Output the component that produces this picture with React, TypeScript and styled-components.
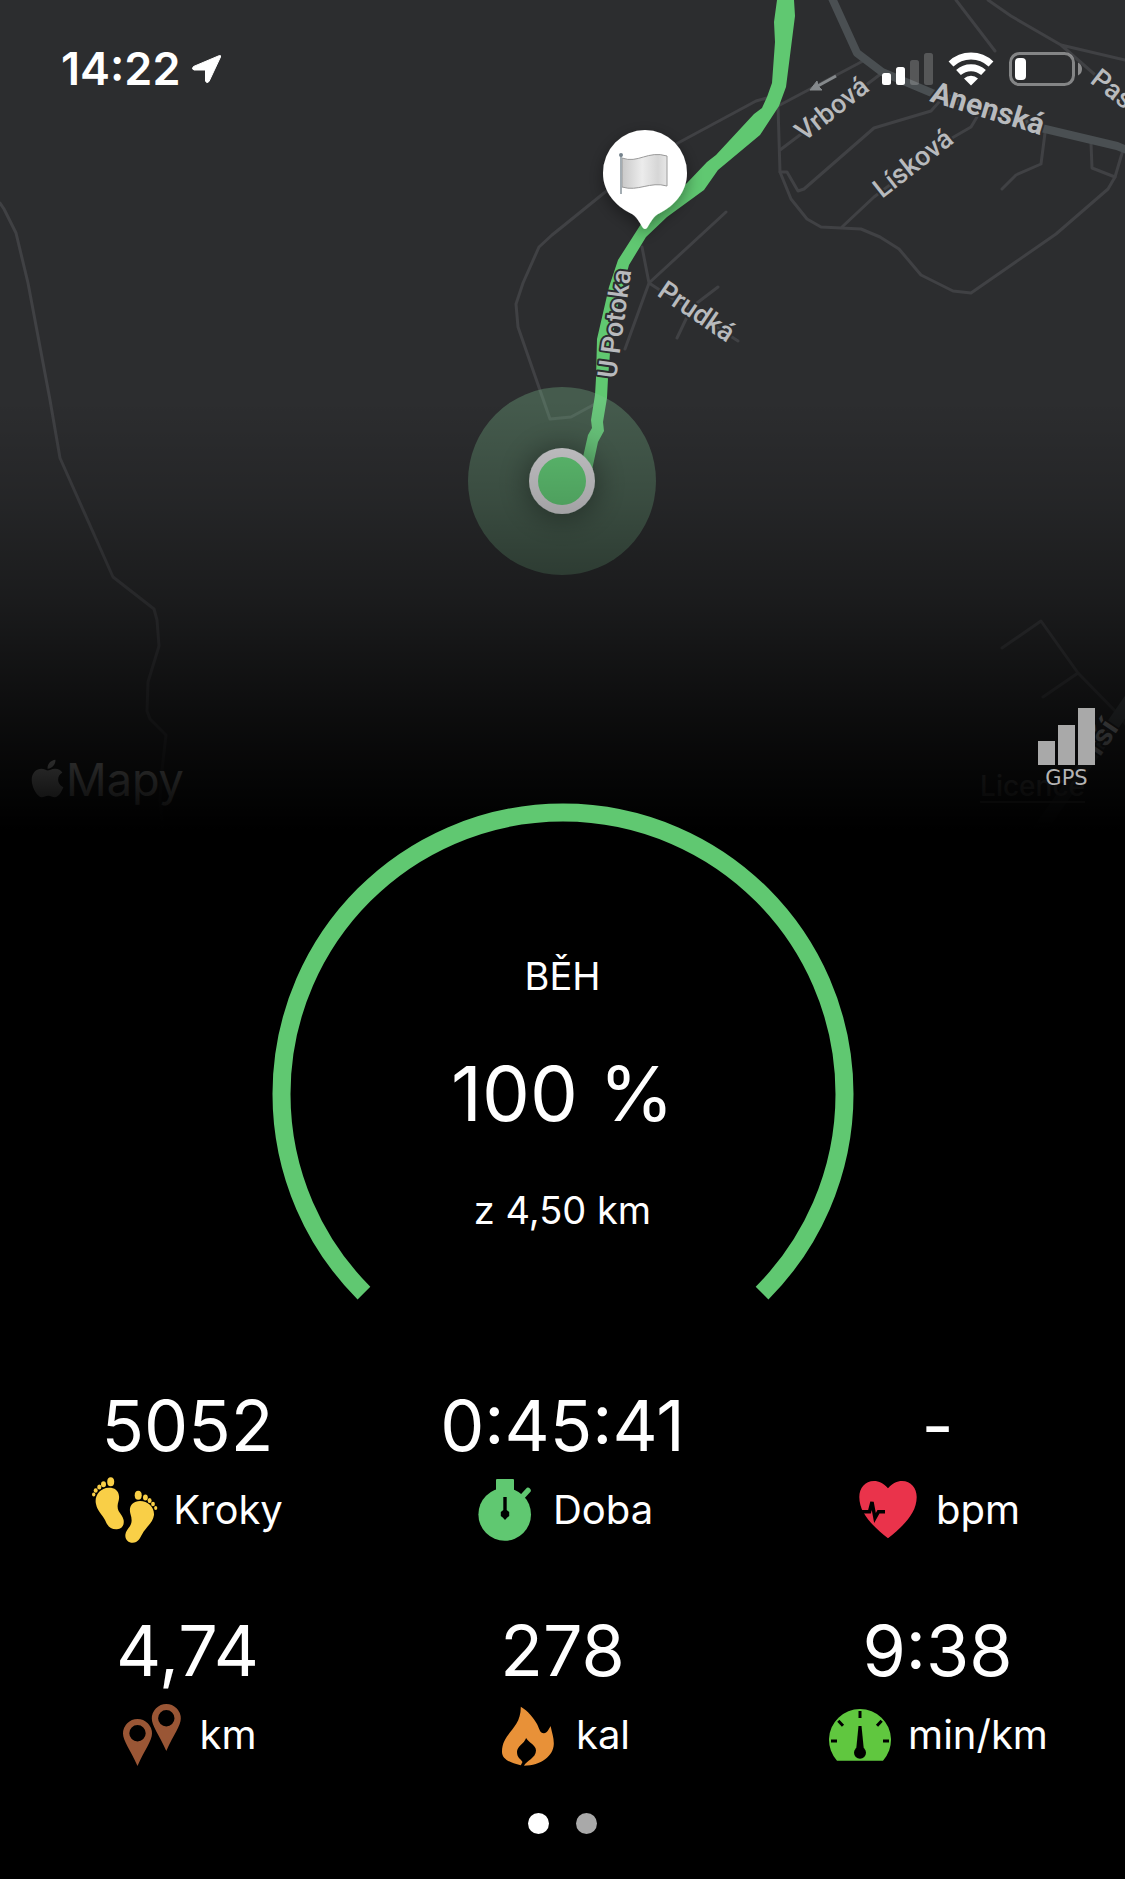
import React from 'react';
import styled, { createGlobalStyle } from 'styled-components';
import { FaApple } from 'react-icons/fa';

const GREEN = '#60c871';
const SANS = '"Inter", "Liberation Sans", sans-serif';

const GlobalStyle = createGlobalStyle`
  * { box-sizing: border-box; }
  html, body { margin: 0; background: #000; }
  body { font-family: ${SANS}; color: #fff; }
`;

const Screen = styled.main`
  display: flex;
  flex-direction: column;
  min-height: 100vh;
  overflow: hidden;
  background: #000;
`;

/* ---------- map ---------- */

const MapPanel = styled.section`
  display: grid;
  grid-template: minmax(0, 1fr) / minmax(0, 1fr);
  height: 832px;
  margin-bottom: -29px;
  background: #2c2d2f;
  & > * { grid-area: 1 / 1; }
`;

const MapCanvas = styled.svg`
  display: block;
  width: 100%;
  height: 100%;
`;

const StreetName = styled.text<{ $bold?: boolean }>`
  font-family: "Roboto", ${SANS};
  font-size: ${(p) => (p.$bold ? 30 : 27)}px;
  font-weight: ${(p) => (p.$bold ? 700 : 500)};
  fill: #b8babd;
  stroke: #2c2d2f;
  stroke-width: 4px;
  stroke-linejoin: round;
  paint-order: stroke;
`;

const Attribution = styled.div`
  align-self: end;
  display: flex;
  justify-content: space-between;
  align-items: flex-end;
  padding: 0 40px 24px 31px;
`;

const MapsBrand = styled.span`
  display: flex;
  align-items: center;
  gap: 2px;
  font-size: 45px;
  line-height: 56px;
  font-weight: 400;
  color: #fff;
  svg { width: 33px; height: 43px; margin-bottom: 4px; }
`;

const LicenceLink = styled.a`
  font-size: 28px;
  line-height: 44px;
  font-weight: 500;
  color: #848484;
  text-underline-offset: 5px;
`;

const Fade = styled.div`
  pointer-events: none;
  background: linear-gradient(
    rgba(0, 0, 0, 0) 400px,
    rgba(0, 0, 0, 0.17) 500px,
    rgba(0, 0, 0, 0.4) 600px,
    rgba(0, 0, 0, 0.68) 700px,
    rgba(0, 0, 0, 0.86) 770px,
    #000 830px
  );
`;

const Overlay = styled.div`
  display: flex;
  flex-direction: column;
  justify-content: space-between;
  pointer-events: none;
`;

const StatusBar = styled.header`
  display: flex;
  justify-content: space-between;
  align-items: center;
  padding: 41px 42px 0 61px;
  height: 97px;
`;

const Clock = styled.div`
  display: flex;
  align-items: center;
  gap: 11px;
  font-size: 45px;
  line-height: 56px;
  font-weight: 600;
`;

const StatusIcons = styled.div`
  display: flex;
  align-items: center;
  gap: 15px;
  svg { display: block; }
`;

const GpsBadge = styled.div`
  align-self: flex-end;
  display: flex;
  flex-direction: column;
  align-items: center;
  margin: 0 30px 41px 0;
  font: 21px/26px "DejaVu Sans", sans-serif;
  color: #b4b4b4;
  svg { display: block; }
`;

/* ---------- progress ring ---------- */

const Progress = styled.section`
  align-self: center;
  display: grid;
  & > * { grid-area: 1 / 1; }
  svg { display: block; }
`;

const ProgressText = styled.div`
  display: flex;
  flex-direction: column;
  align-items: center;
  gap: 49px;
  padding-top: 149px;
`;

const Caption = styled.span`
  font-size: 38px;
  line-height: 48px;
`;

const Percent = styled.strong`
  font-size: 76px;
  line-height: 88px;
  font-weight: 400;
`;

/* ---------- stats ---------- */

const Stats = styled.section`
  display: grid;
  grid-template-columns: repeat(3, minmax(0, 1fr));
  row-gap: 65px;
  margin-top: 84px;
`;

const Stat = styled.div`
  display: flex;
  flex-direction: column;
  align-items: center;
  gap: 8px;
`;

const Value = styled.span`
  font-size: 70px;
  line-height: 84px;
`;

const Label = styled.span`
  display: flex;
  align-items: center;
  gap: 15px;
  height: 68px;
  font-size: 40px;
  line-height: 48px;
  svg { display: block; flex: none; }
`;

const Pager = styled.nav`
  display: flex;
  justify-content: center;
  gap: 27px;
  padding: 44px 0 45px;
`;

const Dot = styled.button<{ $active?: boolean }>`
  width: 21px;
  height: 21px;
  padding: 0;
  border: 0;
  border-radius: 50%;
  background: ${(p) => (p.$active ? '#fff' : '#a9a9a9')};
`;

/* ---------- drawings ---------- */

const roads = [
  'M0 203L4 209L16 233L28 283L50 400L60 458L113 577L154 609L157 620L159 646L148 682L147 711L150 719L166 735L162 770L160 800L163 832',
  'M767 98L756 101L678 143L604 193L562 227L552 235L539 247L523 283L516 304L518 327L550 419L571 417L595 404',
  'M642 247L649 283L726 212M649 283L625 349M649 283L738 341M718 287L697 303L687 317L677 338',
  'M778 106L780 172L791 199L807 219L821 227L861 229L880 237L899 249L921 275L953 291L971 293L1056 234L1108 189L1115 177L1123 150',
  'M1115 177L1092 168L1091 143',
  'M780 172L787 172L798 191L804 189L874 128L931 111L939 102',
  'M1045 133L1041 164L1016 175L1002 189',
  'M842 227L874 197L952 138L971 127L977 117',
  'M780 150L882 73M778 106L863 61',
  'M956 0L995 51M988 0L1011 16L1061 45L1125 60M1061 45L1093 73L1125 100',
  'M1002 648L1041 621L1078 673L1118 714L1130 730M1043 697L1078 673',
];

const route =
  'M777 0L774 22L775 42L772 83L767 97L762 108L754 114L716 155L707 162L687 183L641 224L618 260L609 287L597 339L596 378L595 395L591 420L592 428L588 435L583 457L587 473L592 470L598 442L604 431L603 422L607 398L608 378L610 353L618 305L629 265L646 237L667 217L704 190L718 170L760 135L779 106L786 87L795 16L794 0Z';

const StreetMap = () => (
  <MapCanvas viewBox="0 0 1125 832" preserveAspectRatio="xMidYMin slice" role="img" aria-label="Mapa trasy">
    <defs>
      <linearGradient id="cloth" x1="0" x2="1" y1="0" y2="0">
        <stop offset="0" stopColor="#c9c9c9" />
        <stop offset="0.45" stopColor="#ececec" />
        <stop offset="0.8" stopColor="#d6d6d6" />
        <stop offset="1" stopColor="#e6e6e6" />
      </linearGradient>
      <filter id="shadow" x="-50%" y="-50%" width="200%" height="200%">
        <feDropShadow dx="0" dy="5" stdDeviation="8" floodColor="#000" floodOpacity="0.4" />
      </filter>
      <filter id="glow" x="-60%" y="-60%" width="220%" height="220%">
        <feDropShadow dx="0" dy="2" stdDeviation="16" floodColor="#000" floodOpacity="0.45" />
      </filter>
    </defs>
    <g fill="none" stroke="#404144" strokeWidth="3" strokeLinejoin="round" strokeLinecap="round">
      {roads.map((d) => (
        <path key={d} d={d} />
      ))}
    </g>
    <g fill="none" stroke="#4a4f52" strokeLinejoin="round">
      <path strokeWidth="8" d="M831 -4L857 53L882 72L932 93L1041 128L1117 146L1132 152" />
      <path strokeWidth="13" d="M1130 700L1108 732L1038 832" />
    </g>
    <g stroke="#85898c" fill="#85898c">
      <path d="M836 76L816 87" fill="none" strokeWidth="3" />
      <path d="M810 90L817 81L818 86L822 90Z" strokeWidth="1" />
    </g>
    <path d={route} fill={GREEN} />
    <StreetName transform="translate(804 142) rotate(-38)">Vrbová</StreetName>
    <StreetName transform="translate(882 199) rotate(-38)">Lísková</StreetName>
    <StreetName transform="translate(656 295) rotate(34)">Prudká</StreetName>
    <StreetName transform="translate(616 379) rotate(-82)">U Potoka</StreetName>
    <StreetName transform="translate(1089 82) rotate(38)">Pask</StreetName>
    <StreetName $bold transform="translate(929 101) rotate(17)">Anenská</StreetName>
    <StreetName $bold transform="translate(1100 757) rotate(-56)">rší</StreetName>
    <circle cx="562" cy="481" r="94" fill="#82c896" fillOpacity="0.3" />
    <circle cx="562" cy="481" r="33" fill="#cbcacd" filter="url(#glow)" />
    <circle cx="562" cy="481" r="24" fill="#5fc272" />
    <g filter="url(#shadow)">
      <path
        fill="#fff"
        d="M645 130a42 43 0 0 1 42 43c0 19-13 33-27 40c-7 3-9 9-13 15q-2 2-4 0c-4-6-6-12-13-15c-14-7-27-21-27-40a42 43 0 0 1 42-43z"
      />
    </g>
    <path
      d="M622 158C638 164 648 150 667 156V186C650 181 638 192 622 187Z"
      fill="url(#cloth)"
      stroke="#9a9a9a"
      strokeWidth="1"
    />
    <path d="M621 155V194" stroke="#a4adb3" strokeWidth="2" />
    <circle cx="621" cy="155" r="2" fill="#75828c" />
  </MapCanvas>
);

const LocationArrow = () => (
  <svg width="31" height="30" viewBox="0 0 31 30">
    <path
      d="M28.500 1.500L2.500 12.500Q0 15 3 16H14.500V27Q15.500 30 18 27.500L29.500 3Q30 1 28.500 1.500Z"
      fill="#fff"
      stroke="#fff"
      strokeWidth="1"
      strokeLinejoin="round"
    />
  </svg>
);

const Cellular = () => (
  <svg width="51" height="34" viewBox="0 0 51 34">
    <g fill="#fff">
      <rect x="0" y="21" width="9" height="12" rx="2.500" />
      <rect x="14" y="15" width="9" height="18" rx="2.500" />
      <rect x="28" y="8" width="9" height="25" rx="2.500" opacity="0.2" />
      <rect x="42" y="1" width="9" height="32" rx="2.500" opacity="0.2" />
    </g>
  </svg>
);

const Wifi = () => (
  <svg width="46" height="34" viewBox="0 0 46 34">
    <g fill="none" stroke="#fff" strokeWidth="7">
      <path d="M3 12A29 29 0 0 1 43 12" />
      <path d="M10.500 20.500A18.500 18.500 0 0 1 35.500 20.500" />
    </g>
    <path d="M23 33.500L16 26.500A10 10 0 0 1 30 26.500Z" fill="#fff" />
  </svg>
);

const Battery = () => (
  <svg width="74" height="34" viewBox="0 0 74 34">
    <rect x="1.500" y="1.500" width="63" height="31" rx="9" fill="none" stroke="#fff" strokeOpacity="0.42" strokeWidth="3" />
    <path d="M69 10.500Q73 12.500 73 17T69 23.500Z" fill="#fff" fillOpacity="0.45" />
    <rect x="6" y="6" width="11" height="22" rx="4" fill="#fff" />
  </svg>
);

const SignalBars = () => (
  <svg width="57" height="57" viewBox="0 0 57 57" fill="#a9a9a9">
    <path d="M0 33h17v24H0zM20 17h17v40H20zM40 0h17v57H40z" />
  </svg>
);

const Icon = ({ children }: { children: React.ReactNode }) => (
  <svg width="66" height="66" viewBox="0 0 66 66" aria-hidden="true">
    {children}
  </svg>
);

const Footprints = () => (
  <Icon>
    <g fill="#f9cf47">
      <path d="M16.600 10.700C8 11 2 19 4 27C5.500 34 9 36 13 43C16 50 19 52.600 25 52.300C30 52 32.500 48 31.600 43C30 36 25.500 36 25.600 29C25.700 25 27.500 23 27 19C26.500 13 22 10.500 16.600 10.700Z" />
      <ellipse cx="18.700" cy="4.700" rx="3.500" ry="4.500" />
      <ellipse cx="11.500" cy="7.200" rx="2.500" ry="3" />
      <ellipse cx="7.300" cy="10" rx="2.100" ry="2.500" />
      <ellipse cx="3.700" cy="13.500" rx="2" ry="2.200" />
      <ellipse cx="1.700" cy="17.500" rx="1.700" ry="2" />
      <path d="M48 24C42 24 38 27.500 37.900 33C37.800 37 39.800 39 39.600 44C39.200 50 35 51 33.500 57C32.500 62 36 65.700 40.700 65.700C46 65.700 48 61 50 57.500C53 51 61 46 62 38C62.500 30 56 24 48 24Z" />
      <ellipse cx="46.200" cy="18.300" rx="3.500" ry="4.500" />
      <ellipse cx="53.400" cy="20.400" rx="2.400" ry="3" />
      <ellipse cx="57.600" cy="23.400" rx="2" ry="2.500" />
      <ellipse cx="61" cy="27" rx="1.900" ry="2.200" />
      <ellipse cx="63.700" cy="31" rx="1.600" ry="2" />
    </g>
  </Icon>
);

const Stopwatch = () => (
  <Icon>
    <g fill={GREEN}>
      <circle cx="32.700" cy="37.400" r="26.300" />
      <rect x="24" y="2" width="18" height="14" rx="1" />
      <path d="M50 20L56 13.500" stroke={GREEN} strokeWidth="5.500" strokeLinecap="round" />
    </g>
    <path d="M31.300 20h3.400v13l2.500 2v4l-2.500 2l-1 1.500h-1.400l-1-1.500l-2.500-2v-4l2.500-2z" fill="#000" />
  </Icon>
);

const HeartRate = () => (
  <Icon>
    <path
      fill="#ea334b"
      d="M33 11.300C28.500 6 24 4 19 4C10 4 4.300 11 4.300 20C4.300 37 19 50 33 61.300C47 50 61.700 37 61.700 20C61.700 11 56 4 47 4C42 4 37.500 6 33 11.300Z"
    />
    <path d="M5 34.700H14.500L17 25L20 41L23.500 34.700H30" fill="none" stroke="#000" strokeWidth="3.500" />
  </Icon>
);

const MapPins = () => (
  <Icon>
    <g fill="#9a5635" fillRule="evenodd">
      <path d="M18.500 17A14.500 14.500 0 0 1 33 31.500C33 39 26 47 18.500 64C11 47 4 39 4 31.500A14.500 14.500 0 0 1 18.500 17ZM18.500 23a8.200 8.200 0 1 0 0 16.400a8.200 8.200 0 1 0 0-16.400Z" />
      <path d="M47.300 2A14.500 14.500 0 0 1 61.800 16.500C61.800 24 54.800 32 47.300 49C39.800 32 32.800 24 32.800 16.500A14.500 14.500 0 0 1 47.300 2ZM47.300 8a8.200 8.200 0 1 0 0 16.400a8.200 8.200 0 1 0 0-16.400Z" />
    </g>
  </Icon>
);

const Flame = () => (
  <Icon>
    <path
      fill="#e89138"
      d="M25.800 4.700C33 9 38 15 42 22C44.500 27 45 31.500 49 31.300C52 31 54 27 55.600 24C57 31 59 36 58.800 42C58.500 54 46 63.500 29 63.700C31 59 41 56 41 48.500C41 43 34 41 31.100 36C29 42 22 44 22 50C22 56 26 57 27.500 60L25.800 63.200C15 61 7 57 7 50C7 30 26 28 25.800 4.700Z"
    />
  </Icon>
);

const Speedometer = () => (
  <Icon>
    <path fill="#60c73f" d="M10 58.700A31 31 0 1 1 56 58.700Z" />
    <path
      d="M33 9V16M4 39H10M56 39H62M11.300 18.700L16 23.700M54.700 18.700L50 23.700"
      stroke="#000"
      strokeWidth="3"
    />
    <path d="M31.500 24h3L37 49h-8z" fill="#000" />
    <circle cx="33" cy="50.700" r="6" fill="#000" />
  </Icon>
);

const stats = [
  { value: '5052', label: 'Kroky', icon: <Footprints /> },
  { value: '0:45:41', label: 'Doba', icon: <Stopwatch /> },
  { value: '-', label: 'bpm', icon: <HeartRate /> },
  { value: '4,74', label: 'km', icon: <MapPins /> },
  { value: '278', label: 'kal', icon: <Flame /> },
  { value: '9:38', label: 'min/km', icon: <Speedometer /> },
];

export default function App() {
  return (
    <Screen>
      <GlobalStyle />
      <MapPanel>
        <StreetMap />
        <Attribution>
          <MapsBrand>
            <FaApple />
            Mapy
          </MapsBrand>
          <LicenceLink href="#licence">Licence</LicenceLink>
        </Attribution>
        <Fade />
        <Overlay>
          <StatusBar>
            <Clock>
              14:22
              <LocationArrow />
            </Clock>
            <StatusIcons>
              <Cellular />
              <Wifi />
              <Battery />
            </StatusIcons>
          </StatusBar>
          <GpsBadge>
            <SignalBars />
            GPS
          </GpsBadge>
        </Overlay>
      </MapPanel>

      <Progress>
        <svg width="582" height="497" viewBox="0 0 582 497" aria-hidden="true">
          <path
            d="M91.950 490.050A281.500 281.500 0 1 1 490.050 490.050"
            fill="none"
            stroke={GREEN}
            strokeWidth="18"
          />
        </svg>
        <ProgressText>
          <Caption>BĚH</Caption>
          <Percent>100 %</Percent>
          <Caption>z 4,50 km</Caption>
        </ProgressText>
      </Progress>

      <Stats>
        {stats.map((s) => (
          <Stat key={s.label}>
            <Value>{s.value}</Value>
            <Label>
              {s.icon}
              {s.label}
            </Label>
          </Stat>
        ))}
      </Stats>

      <Pager aria-label="Stránky">
        <Dot type="button" $active aria-label="Strana 1" />
        <Dot type="button" aria-label="Strana 2" />
      </Pager>
    </Screen>
  );
}
